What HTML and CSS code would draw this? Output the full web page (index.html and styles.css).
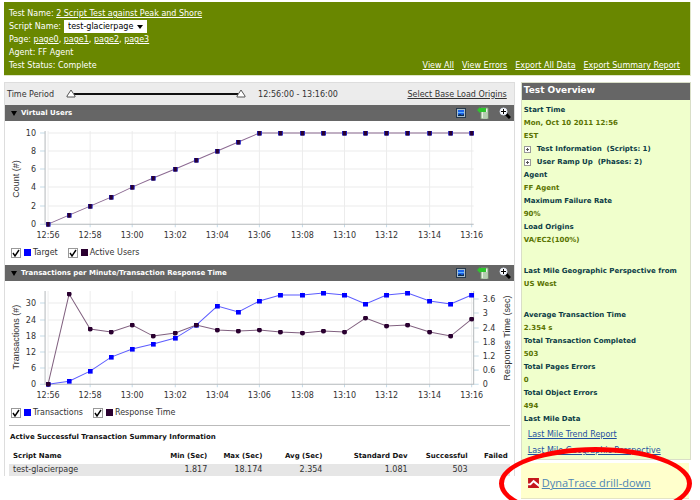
FILE: index.html
```
<!DOCTYPE html>
<html lang="en">
<head>
    <meta charset="UTF-8">
    <meta name="viewport" content="width=device-width, initial-scale=1.0">
    <title>Test Results</title>
    <link rel="stylesheet" href="styles.css">
</head>
<body>
    <!-- shared icons and chart markers -->
    <svg class="defs" width="0" height="0" aria-hidden="true">
        <defs>
            <symbol id="icon-image" viewBox="0 0 12 12">
                <rect x="1.5" y="1.5" width="9" height="9" fill="#a9bccb" stroke="#26394d"/>
                <rect x="3" y="3" width="6" height="6" fill="#1b62e8"/>
                <path d="M3 5h6v1H3z" fill="#5fb4ff"/>
                <path d="M3 9V8l2-1 2 1 2-1v2z" fill="#0c2c4c"/>
            </symbol>
            <symbol id="icon-export" viewBox="0 0 12 12">
                <path d="M4 1h7v11H4z" fill="#e6f2e2" stroke="#7c9c74" stroke-width="1"/>
                <path d="M6 6h4M6 8h4M6 10h4" stroke="#86a880" stroke-width="1"/>
                <path d="M0 3l3-3v1h6v4H3v1z" fill="#2fc52f"/>
            </symbol>
            <symbol id="icon-zoom" viewBox="0 0 12 12">
                <path d="M7 7l4 4" stroke="#000" stroke-width="3"/>
                <circle cx="4.5" cy="4.5" r="3.5" fill="#fff" stroke="#d8e0ee" stroke-width="1"/>
                <path d="M2 4.5h5M4.5 2v5" stroke="#000" stroke-width="1"/>
            </symbol>
            <marker id="dot-users" markerWidth="5" markerHeight="5" refX="2.5" refY="2.5" markerUnits="userSpaceOnUse">
                <rect width="5" height="5" fill="#2020c0"/>
                <rect x="1" width="3" height="5" fill="#2a0030"/>
            </marker>
            <marker id="dot-trans" markerWidth="5" markerHeight="5" refX="2.5" refY="2.5" markerUnits="userSpaceOnUse">
                <rect width="5" height="5" fill="#0000ff"/>
            </marker>
            <marker id="dot-resp" markerWidth="5" markerHeight="5" refX="2.5" refY="2.5" markerUnits="userSpaceOnUse">
                <circle cx="2.5" cy="2.5" r="2.5" fill="#2a0030"/>
            </marker>
        </defs>
    </svg>

    <div class="page">
        <header class="header">
            <div class="header-info">
                <div>Test Name: <a href="#">2 Script Test against Peak and Shore</a></div>
                <div class="script-line">
                    <label for="script">Script Name:</label>
                    <span class="select-wrap">
                        <select id="script">
                            <option>test-glacierpage</option>
                        </select>
                    </span>
                </div>
                <div>Page: <a href="#">page0</a>, <a href="#">page1</a>, <a href="#">page2</a>, <a href="#">page3</a></div>
                <div>Agent: FF Agent</div>
                <div>Test Status: Complete</div>
            </div>
            <nav class="header-links">
                <a href="#">View All</a>
                <a href="#">View Errors</a>
                <a href="#">Export All Data</a>
                <a href="#">Export Summary Report</a>
            </nav>
        </header>

        <div class="columns">
            <main class="results">
                <div class="period">
                    <span>Time Period</span>
                    <div class="range">
                        <input type="range" min="0" max="20" value="0" aria-label="Period start">
                        <input type="range" min="0" max="20" value="20" aria-label="Period end">
                    </div>
                    <span class="period-value">12:56:00 - 13:16:00</span>
                    <a href="#">Select Base Load Origins</a>
                </div>

                <section class="chart-box">
                    <div class="bar">
                        <span class="arrow"></span>
                        <h2>Virtual Users</h2>
                        <button type="button" aria-label="Save image"><svg><use href="#icon-image"/></svg></button>
                        <button type="button" aria-label="Export"><svg><use href="#icon-export"/></svg></button>
                        <button type="button" aria-label="Zoom"><svg><use href="#icon-zoom"/></svg></button>
                    </div>
                    <svg class="chart" viewBox="0 0 508 122">
                        <path class="grid" d="M43 12H468M43 30H468M43 48H468M43 66H468M43 85H468M43 10V103M85 10V103M127 10V103M170 10V103M212 10V103M254 10V103M297 10V103M339 10V103M381 10V103M424 10V103M466 10V103"/>
                        <path class="tick" d="M35 12h5M35 30h5M35 48h5M35 66h5M35 85h5M35 103h5M43 103v3M85 103v3M127 103v3M170 103v3M212 103v3M254 103v3M297 103v3M339 103v3M381 103v3M424 103v3M466 103v3"/>
                        <path class="axis" d="M40 10V103H468"/>
                        <g class="labels end">
                            <text x="31" y="15">10</text>
                            <text x="31" y="33">8</text>
                            <text x="31" y="51">6</text>
                            <text x="31" y="69">4</text>
                            <text x="31" y="88">2</text>
                            <text x="31" y="106">0</text>
                        </g>
                        <g class="labels middle">
                            <text x="43" y="117">12:56</text>
                            <text x="85" y="117">12:58</text>
                            <text x="127" y="117">13:00</text>
                            <text x="170" y="117">13:02</text>
                            <text x="212" y="117">13:04</text>
                            <text x="254" y="117">13:06</text>
                            <text x="297" y="117">13:08</text>
                            <text x="339" y="117">13:10</text>
                            <text x="381" y="117">13:12</text>
                            <text x="424" y="117">13:14</text>
                            <text x="466" y="117">13:16</text>
                        </g>
                        <text class="axis-title" transform="translate(14 58) rotate(-90)">Count (#)</text>
                        <polyline class="line users" points="43,103 64,94 85,85 106,76 127,66 148,57 170,48 191,39 212,30 233,21 254,12 275,12 297,12 318,12 339,12 360,12 381,12 402,12 424,12 445,12 466,12"/>
                    </svg>
                    <div class="legend">
                        <label><input type="checkbox" checked><i class="swatch blue"></i>Target</label>
                        <label><input type="checkbox" checked><i class="swatch purple"></i>Active Users</label>
                    </div>
                </section>

                <section class="chart-box">
                    <div class="bar">
                        <span class="arrow"></span>
                        <h2>Transactions per Minute/Transaction Response Time</h2>
                        <button type="button" aria-label="Save image"><svg><use href="#icon-image"/></svg></button>
                        <button type="button" aria-label="Export"><svg><use href="#icon-export"/></svg></button>
                        <button type="button" aria-label="Zoom"><svg><use href="#icon-zoom"/></svg></button>
                    </div>
                    <svg class="chart" viewBox="0 0 508 122">
                        <path class="grid" d="M43 22H468M43 39H468M43 55H468M43 71H468M43 87H468M43 10V103M85 10V103M127 10V103M170 10V103M212 10V103M254 10V103M297 10V103M339 10V103M381 10V103M424 10V103M466 10V103"/>
                        <path class="tick" d="M35 22h5M35 39h5M35 55h5M35 71h5M35 87h5M35 103h5M468 18h5M468 32h5M468 47h5M468 61h5M468 75h5M468 89h5M468 103h5M43 103v3M85 103v3M127 103v3M170 103v3M212 103v3M254 103v3M297 103v3M339 103v3M381 103v3M424 103v3M466 103v3"/>
                        <path class="axis" d="M40 10V103H468V10"/>
                        <g class="labels end">
                            <text x="31" y="25">30</text>
                            <text x="31" y="42">24</text>
                            <text x="31" y="58">18</text>
                            <text x="31" y="74">12</text>
                            <text x="31" y="90">6</text>
                            <text x="31" y="106">0</text>
                        </g>
                        <g class="labels">
                            <text x="477" y="21">3.6</text>
                            <text x="477" y="35">3</text>
                            <text x="477" y="50">2.4</text>
                            <text x="477" y="64">1.8</text>
                            <text x="477" y="78">1.2</text>
                            <text x="477" y="92">0.6</text>
                            <text x="477" y="106">0</text>
                        </g>
                        <g class="labels middle">
                            <text x="43" y="117">12:56</text>
                            <text x="85" y="117">12:58</text>
                            <text x="127" y="117">13:00</text>
                            <text x="170" y="117">13:02</text>
                            <text x="212" y="117">13:04</text>
                            <text x="254" y="117">13:06</text>
                            <text x="297" y="117">13:08</text>
                            <text x="339" y="117">13:10</text>
                            <text x="381" y="117">13:12</text>
                            <text x="424" y="117">13:14</text>
                            <text x="466" y="117">13:16</text>
                        </g>
                        <text class="axis-title" transform="translate(14 56) rotate(-90)">Transactions (#)</text>
                        <text class="axis-title" transform="translate(504 57) rotate(-90)">Response Time (sec)</text>
                        <polyline class="line trans" points="43,103 64,100 85,90 106,76 127,68 148,63 170,57 191,44 212,25 233,31 254,20 275,14 297,14 318,12 339,14 360,23 381,14 402,12 424,20 445,23 466,14"/>
                        <polyline class="line resp" points="43,103 64,13 85,48 106,51 127,44 148,55 170,52 191,44 212,49 233,50 254,49 275,51 297,52 318,50 339,51 360,37 381,45 402,44 424,51 445,55 466,38"/>
                    </svg>
                    <div class="legend">
                        <label><input type="checkbox" checked><i class="swatch blue"></i>Transactions</label>
                        <label><input type="checkbox" checked><i class="swatch purple"></i>Response Time</label>
                    </div>
                </section>

                <section class="summary">
                    <h3>Active Successful Transaction Summary Information</h3>
                    <table>
                        <thead>
                            <tr>
                                <th class="col-name">Script Name</th>
                                <th class="col-min">Min (Sec)</th>
                                <th class="col-max">Max (Sec)</th>
                                <th class="col-avg">Avg (Sec)</th>
                                <th class="col-dev">Standard Dev</th>
                                <th class="col-ok">Successful</th>
                                <th class="col-failed">Failed</th>
                            </tr>
                        </thead>
                        <tbody>
                            <tr>
                                <td>test-glacierpage</td>
                                <td>1.817</td>
                                <td>18.174</td>
                                <td>2.354</td>
                                <td>1.081</td>
                                <td>503</td>
                                <td></td>
                            </tr>
                        </tbody>
                    </table>
                </section>
            </main>

            <aside class="side">
                <section class="overview">
                    <h2>Test Overview</h2>
                    <dl>
                        <dt>Start Time</dt>
                        <dd>Mon, Oct 10 2011 12:56<br>EST</dd>
                        <dt class="expand"><button type="button" aria-label="Expand test information"></button>Test Information &nbsp;(Scripts: 1)</dt>
                        <dt class="expand"><button type="button" aria-label="Expand user ramp up"></button>User Ramp Up &nbsp;(Phases: 2)</dt>
                        <dt>Agent</dt>
                        <dd>FF Agent</dd>
                        <dt>Maximum Failure Rate</dt>
                        <dd>90%</dd>
                        <dt>Load Origins</dt>
                        <dd>VA/EC2(100%)</dd>
                        <dt class="spaced">Last Mile Geographic Perspective from</dt>
                        <dd>US West</dd>
                        <dt class="spaced">Average Transaction Time</dt>
                        <dd>2.354 s</dd>
                        <dt>Total Transaction Completed</dt>
                        <dd>503</dd>
                        <dt>Total Pages Errors</dt>
                        <dd>0</dd>
                        <dt>Total Object Errors</dt>
                        <dd>494</dd>
                        <dt>Last Mile Data</dt>
                    </dl>
                    <div class="overview-links">
                        <a href="#">Last Mile Trend Report</a>
                        <a href="#">Last Mile Geographic Perspective</a>
                    </div>
                </section>
                <div class="drill">
                    <svg class="drill-logo" viewBox="0 0 12 11" aria-hidden="true">
                        <rect width="12" height="11" fill="#c4161c"/>
                        <path d="M0 6l2 0 4-4 6 5v3L6 5 3 8 0 8z" fill="#fff"/>
                    </svg>
                    <a href="#">DynaTrace drill-down</a>
                    <span class="ring"></span>
                </div>
            </aside>
        </div>
    </div>
</body>
</html>
```
FILE: styles.css
```
* {
    box-sizing: border-box;
}
body {
    margin: 0;
    font-family: "DejaVu Sans", Verdana, sans-serif;
    font-size: 8px;
    line-height: 13px;
    color: #333;
    background-color: #fff;
}
h2, h3, dl, dd {
    margin: 0;
}
button {
    padding: 0;
    border: none;
    background: none;
    cursor: pointer;
}
.defs {
    position: absolute;
}
.page {
    min-height: 100vh;
    padding: 2px 9px 3px 4px;
    overflow: hidden;
    position: relative;
}

/* Header */
.header {
    display: flex;
    justify-content: space-between;
    align-items: flex-end;
    padding: 5px 10px 3px 5px;
    margin-bottom: 6px;
    background-color: #698700;
    border: 1px solid #dfe5c8;
    border-width: 0 1px 1px 0;
    color: #fff;
}
.header a {
    color: #fff;
}
.script-line {
    display: flex;
}
.header-links {
    display: flex;
    gap: 8px;
}
.select-wrap {
    position: relative;
    margin-left: 3px;
}
.select-wrap::after {
    content: "";
    position: absolute;
    top: 5px;
    right: 4px;
    border: 3px solid transparent;
    border-top: 4px solid #000;
    border-bottom: none;
    pointer-events: none;
}
select {
    display: block;
    appearance: none;
    height: 13px;
    padding: 0 13px 0 4px;
    border: none;
    border-radius: 0;
    background-color: #fff;
    font: inherit;
    color: #000;
}

/* Columns */
.columns {
    display: grid;
    grid-template-columns: minmax(0, 3fr) minmax(0, 1fr);
    gap: 6px;
    align-items: start;
}
.results {
    border: 1px solid #ddd;
    border-bottom: none;
}

/* Time period */
.period {
    display: flex;
    align-items: center;
    height: 22px;
    padding: 0 7px 0 2px;
    background-color: #ececec;
}
.period a {
    margin-left: auto;
    color: #333;
}
.range {
    display: grid;
    width: 180px;
    margin: 0 12px;
    background: linear-gradient(#111, #111) center / 164px 2px no-repeat;
}
.range input {
    grid-area: 1 / 1;
    appearance: none;
    width: 100%;
    height: 10px;
    margin: 0;
    background: none;
    pointer-events: none;
}
.range input::-webkit-slider-thumb {
    appearance: none;
    width: 10px;
    height: 10px;
    background: url("data:image/svg+xml,%3Csvg xmlns='http://www.w3.org/2000/svg' viewBox='0 0 10 10'%3E%3Cpath d='M5 1L9 7V8H1V7z' fill='%23fff' stroke='%23555'/%3E%3C/svg%3E");
    pointer-events: auto;
}

/* Charts */
.chart-box {
    margin-bottom: 3px;
}
.bar {
    display: flex;
    align-items: center;
    gap: 10px;
    height: 16px;
    padding: 0 3px 0 6px;
    background-color: #666;
    color: #fff;
}
.bar h2 {
    flex: 1;
    margin-left: -6px;
    font-size: 7px;
}
.bar svg {
    display: block;
    width: 12px;
    height: 12px;
}
.arrow {
    border: 3px solid transparent;
    border-top: 5px solid #000;
    border-bottom: none;
}
.chart {
    display: block;
    width: 100%;
}
.grid, .tick, .axis, .line {
    fill: none;
}
.grid {
    stroke: #ececec;
}
.tick {
    stroke: #c5dbe8;
}
.axis {
    stroke: #b4b9bc;
}
.labels {
    font-size: 8px;
    fill: #333;
}
.end {
    text-anchor: end;
}
.middle {
    text-anchor: middle;
}
.axis-title {
    font-family: "Liberation Sans", Arial, sans-serif;
    font-size: 9px;
    text-anchor: middle;
    fill: #333;
}
.users {
    stroke: #8c6a92;
    marker: url(#dot-users);
}
.trans {
    stroke: #5c5cff;
    marker: url(#dot-trans);
}
.resp {
    stroke: #80607f;
    marker: url(#dot-resp);
}
.legend {
    display: flex;
    gap: 10px;
    height: 19px;
    padding-left: 6px;
}
.legend label {
    display: flex;
    align-items: center;
}
.legend input {
    appearance: none;
    width: 10px;
    height: 10px;
    margin: 0 3px 0 0;
    border: 1px solid #999;
    background: #fff url("data:image/svg+xml,%3Csvg xmlns='http://www.w3.org/2000/svg' viewBox='0 0 8 8'%3E%3Cpath d='M1 4l2 3 4-6' fill='none' stroke='%23000' stroke-width='1.4'/%3E%3C/svg%3E");
}
.swatch {
    width: 7px;
    height: 7px;
    margin-right: 2px;
}
.blue {
    background-color: #0000ff;
}
.purple {
    background-color: #2a0030;
}

/* Summary table */
.summary {
    margin: 0 4px;
    padding-top: 5px;
    border-top: 1px solid #bbb;
}
.summary h3 {
    margin-left: 1px;
    font-size: 7px;
    color: #111;
}
table {
    width: 100%;
    table-layout: fixed;
    border-collapse: collapse;
}
th, td {
    padding: 0 2px;
    text-align: right;
}
th {
    height: 20px;
    padding-top: 4px;
    font-size: 7px;
    color: #111;
}
td {
    height: 12px;
    line-height: 12px;
    background-color: #e6e6e6;
}
th:first-child, td:first-child {
    padding-left: 4px;
    text-align: left;
}
.col-name { width: 29%; }
.col-min { width: 11%; }
.col-max { width: 11%; }
.col-avg { width: 12%; }
.col-dev { width: 17%; }
.col-ok { width: 12%; }
.col-failed { width: 8%; }

/* Test overview */
.overview {
    padding-bottom: 2px;
    border: 1px solid #d9dec8;
    background-color: #f0ffcc;
}
.overview h2 {
    height: 17px;
    padding-left: 2px;
    background-color: #666;
    font-size: 9px;
    line-height: 14px;
    color: #fff;
}
dl {
    padding: 4px 0 0 2px;
    font-size: 7px;
    font-weight: bold;
    white-space: nowrap;
}
dt {
    color: #0b3c46;
}
dd {
    color: #5a7300;
}
.spaced {
    margin-top: 18px;
}
.expand {
    display: flex;
    align-items: center;
    gap: 6px;
}
.expand button {
    width: 7px;
    height: 7px;
    border: 1px solid #999;
    background: linear-gradient(#555, #555) center / 3px 1px no-repeat, linear-gradient(#555, #555) center / 1px 3px no-repeat, #fff;
}
.overview-links {
    display: flex;
    flex-direction: column;
    align-items: flex-start;
    gap: 3px;
    padding: 2px 0 0 6px;
    white-space: nowrap;
}
.overview-links a {
    color: #1f4fa0;
}
.drill {
    position: relative;
    display: flex;
    align-items: center;
    gap: 3px;
    height: 36px;
    margin: 3px 2px 0 0;
    padding: 4px 0 0 7px;
    background-color: #ffffcc;
    border-bottom: 1px solid #e4e4c4;
    font-family: "Open Sans", sans-serif;
    font-size: 11px;
}
.drill a {
    color: #4f86b5;
}
.drill-logo {
    width: 11px;
    height: 10px;
}
/* red ring that calls out the drill-down link */
.ring {
    position: absolute;
    top: -16px;
    left: -22px;
    right: -3px;
    height: 73px;
    border: 5px solid #f00;
    border-radius: 50%;
    pointer-events: none;
}
```
